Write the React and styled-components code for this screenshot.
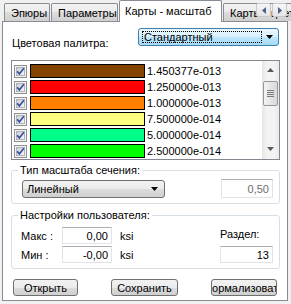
import React from 'react'
import styled, { createGlobalStyle } from 'styled-components'

const GlobalStyle = createGlobalStyle`
    body {
        margin: 0;
        background: #f0f0f0;
    }
    * {
        box-sizing: border-box;
    }
`

const tabs = [
    { label: 'Эпюры', w: 46 },
    { label: 'Параметры', w: 67 },
    { label: 'Карты - масштаб', w: 103, active: true },
    { label: 'Карты - цвета', w: 80 },
]

const rows = [
    { color: '#844400', value: '1.450377e-013' },
    { color: '#ff0000', value: '1.250000e-013' },
    { color: '#ff8000', value: '1.000000e-013' },
    { color: '#ffff80', value: '7.500000e-014' },
    { color: '#00ff88', value: '5.000000e-014' },
    { color: '#00ff00', value: '2.500000e-014' },
]

function Arrow({ color = '#000', up }) {
    return (
        <svg width="7" height="4" viewBox="0 0 7 4">
            <path d={up ? 'M0 4 L3.5 0 L7 4 Z' : 'M0 0 L7 0 L3.5 4 Z'} fill={color} />
        </svg>
    )
}

function CheckBox() {
    return (
        <CheckWrap>
            <svg width="13" height="13" viewBox="0 0 13 13">
                <defs>
                    <linearGradient id="cbg" x1="0" y1="0" x2="1" y2="1">
                        <stop offset="0" stopColor="#cbcfd5" />
                        <stop offset="1" stopColor="#f6f6f6" />
                    </linearGradient>
                </defs>
                <rect x="0.5" y="0.5" width="12" height="12" fill="#f4f4f4" stroke="#8e8f8f" />
                <rect x="2.5" y="2.5" width="8" height="8" fill="url(#cbg)" stroke="#aeb3b9" strokeWidth="1" />
                <path d="M3.3 6.4 L5.4 8.9 L9.8 3.2" fill="none" stroke="#3b4fa0" strokeWidth="1.7" />
            </svg>
        </CheckWrap>
    )
}

function App() {
    return (
        <Window>
            <GlobalStyle />
            <TabStrip>
                {tabs.map(t => (
                    <Tab key={t.label} $w={t.w} $active={t.active}>{t.label}</Tab>
                ))}
                <TabScroll>
                    <TabScrollBtn>
                        <svg width="4" height="7" viewBox="0 0 4 7"><path d="M4 0 L0 3.5 L4 7 Z" fill="#4d6185" /></svg>
                    </TabScrollBtn>
                    <TabScrollBtn>
                        <svg width="4" height="7" viewBox="0 0 4 7"><path d="M0 0 L4 3.5 L0 7 Z" fill="#4d6185" /></svg>
                    </TabScrollBtn>
                </TabScroll>
            </TabStrip>

            <Page>
                <PaletteRow>
                    <PaletteLabel>Цветовая палитра:</PaletteLabel>
                    <PaletteCombo>
                        <FocusRect>Стандартный</FocusRect>
                        <ComboArrow><Arrow /></ComboArrow>
                    </PaletteCombo>
                </PaletteRow>

                <ListBox>
                    <ListItems>
                        {rows.map(r => (
                            <ListRow key={r.value}>
                                <CheckBox />
                                <Swatch $color={r.color} />
                                <Value>{r.value}</Value>
                            </ListRow>
                        ))}
                    </ListItems>
                    <ScrollBar>
                        <ScrollBtn><Arrow up color="#5a5a5a" /></ScrollBtn>
                        <Thumb>
                            <Grip /><Grip /><Grip /><Grip />
                        </Thumb>
                        <ScrollBtn><Arrow color="#5a5a5a" /></ScrollBtn>
                    </ScrollBar>
                </ListBox>

                <GroupBox>
                    <Legend>Тип масштаба сечения:</Legend>
                    <ScaleBody>
                        <GrayCombo>
                            <span>Линейный</span>
                            <Arrow />
                        </GrayCombo>
                        <TextBox $w={52} $h={19} $disabled>0,50</TextBox>
                    </ScaleBody>
                </GroupBox>

                <GroupBox $gap={4}>
                    <Legend>Настройки пользователя:</Legend>
                    <SettingsGrid>
                        <FieldLabel>Макс :</FieldLabel>
                        <TextBox $w={50} $h={17}>0,00</TextBox>
                        <Unit>ksi</Unit>
                        <SectionLabel>Раздел:</SectionLabel>

                        <FieldLabel>Мин :</FieldLabel>
                        <TextBox $w={50} $h={17}>-0,00</TextBox>
                        <Unit>ksi</Unit>
                        <TextBox $w={53} $h={17}>13</TextBox>
                    </SettingsGrid>
                </GroupBox>

                <ButtonRow>
                    <Button $w={65}><span>Открыть</span></Button>
                    <Button $w={67}><span>Сохранить</span></Button>
                    <Button $w={66}><span>Нормализовать</span></Button>
                </ButtonRow>
            </Page>
        </Window>
    )
}

export default App

const Window = styled.div`
    width: 291px;
    height: 304px;
    overflow: hidden;
    background: #f0f0f0;
    font-family: "Liberation Sans", Arial, sans-serif;
    font-size: 11px;
    color: #000;
`;

const TabStrip = styled.div`
    position: relative;
    z-index: 1;
    display: flex;
    align-items: flex-start;
    gap: 1px;
    height: 22px;
    padding-left: 4px;
    overflow: hidden;
`;

const Tab = styled.div`
    flex-shrink: 0;
    width: ${p => p.$w}px;
    height: ${p => p.$active ? 22 : 18}px;
    margin-top: ${p => p.$active ? 0 : 3}px;
    display: flex;
    align-items: center;
    padding: ${p => p.$active ? '0 0 2px 5px' : '0 0 0 6px'};
    border: 1px solid #898c95;
    border-bottom: none;
    border-radius: 2px 2px 0 0;
    background: ${p => p.$active
        ? '#ffffff'
        : 'linear-gradient(#f2f2f2, #ebebeb 50%, #dddddd 50%, #cfcfcf)'};
    white-space: nowrap;
    overflow: hidden;
`;

const TabScroll = styled.div`
    position: absolute;
    top: 3px;
    right: 4px;
    display: flex;
    gap: 1px;
`;

const TabScrollBtn = styled.div`
    width: 15px;
    height: 14px;
    display: flex;
    align-items: center;
    justify-content: center;
    border: 1px solid #c5c8cc;
    border-radius: 2px;
    background: linear-gradient(#f6f6f6, #e4e4e4);
`;

const Page = styled.div`
    margin: -1px 3px 0 2px;
    height: 280px;
    border: 1px solid #898c95;
    background: #ffffff;
    padding: 6px 7px 0 8px;
    display: flex;
    flex-direction: column;
`;

const PaletteRow = styled.div`
    display: flex;
    align-items: flex-start;
`;

const PaletteLabel = styled.div`
    margin-top: 8px;
    padding-left: 1px;
    line-height: 14px;
`;

const PaletteCombo = styled.div`
    margin-left: auto;
    margin-right: 1px;
    width: 141px;
    height: 18px;
    display: flex;
    padding: 2px 2px 2px 3px;
    border: 1px solid #3c7fb1;
    border-radius: 3px;
    background: linear-gradient(#eaf6fd, #d9f0fc 50%, #bee6fd 50%, #a7d9f5);
`;

const FocusRect = styled.div`
    flex: 1;
    display: flex;
    align-items: center;
    padding-left: 1px;
    border: 1px dotted #000;
    line-height: 12px;
`;

const ComboArrow = styled.div`
    width: 14px;
    display: flex;
    align-items: center;
    justify-content: center;
`;

const ListBox = styled.div`
    margin-top: 10px;
    height: 100px;
    display: flex;
    border: 1px solid #828790;
    overflow: hidden;
`;

const ListItems = styled.div`
    flex: 1;
    padding: 2px 0 0 2px;
    overflow: hidden;
`;

const ListRow = styled.div`
    height: 16px;
    display: flex;
    align-items: center;
`;

const CheckWrap = styled.div`
    width: 13px;
    height: 13px;
    display: flex;
`;

const Swatch = styled.div`
    width: 115px;
    height: 14px;
    margin-left: 3px;
    border: 1px solid #000;
    background: ${p => p.$color};
`;

const Value = styled.div`
    margin-left: 2px;
    font-size: 11px;
`;

const ScrollBar = styled.div`
    width: 17px;
    display: flex;
    flex-direction: column;
    background: linear-gradient(90deg, #e6e6e6, #f3f3f3 30%, #f3f3f3 70%, #e9e9e9);
    padding-bottom: 2px;
`;

const ScrollBtn = styled.div`
    height: 17px;
    display: flex;
    align-items: center;
    justify-content: center;
    &:last-child {
        margin-top: auto;
    }
`;

const Thumb = styled.div`
    margin: 3px 1px 0 1px;
    height: 25px;
    border: 1px solid #989898;
    border-radius: 2px;
    background: linear-gradient(90deg, #f4f4f4, #e6e6e6 50%, #d8d8d8);
    display: flex;
    flex-direction: column;
    align-items: center;
    justify-content: center;
    gap: 1px;
`;

const Grip = styled.div`
    width: 7px;
    height: 1px;
    background: #7a7a7a;
`;

const GroupBox = styled.fieldset`
    margin: ${p => p.$gap ?? 3}px 0 0 0;
    padding: 0;
    min-width: 0;
    border: 1px solid #d5dfe5;
    border-radius: 3px;
`;

const Legend = styled.legend`
    margin-left: 6px;
    padding: 0 2px;
    line-height: 14px;
    font-size: 11px;
`;

const ScaleBody = styled.div`
    display: flex;
    align-items: center;
    padding: 2px 6px 5px 10px;
`;

const GrayCombo = styled.div`
    width: 143px;
    height: 18px;
    display: flex;
    align-items: center;
    justify-content: space-between;
    padding: 0 6px 0 4px;
    border: 1px solid #707070;
    border-radius: 3px;
    background: linear-gradient(#f2f2f2, #ebebeb 50%, #dddddd 50%, #cfcfcf);
`;

const TextBox = styled.div`
    width: ${p => p.$w}px;
    height: ${p => p.$h}px;
    margin-left: auto;
    display: flex;
    align-items: center;
    justify-content: flex-end;
    padding-right: 3px;
    border: 1px solid #e2e3ea;
    border-top-color: #abadb3;
    background: #ffffff;
    color: ${p => p.$disabled ? '#6d6d6d' : '#000'};
    font-size: 11px;
`;

const SettingsGrid = styled.div`
    display: grid;
    grid-template-columns: 41px 50px 1fr 53px;
    row-gap: 2px;
    align-items: center;
    padding: 5px 6px 5px 9px;
`;

const FieldLabel = styled.div`
    line-height: 14px;
`;

const Unit = styled.div`
    padding-left: 8px;
`;

const SectionLabel = styled.div`
    align-self: start;
    line-height: 14px;
`;

const ButtonRow = styled.div`
    display: flex;
    justify-content: space-between;
    margin-top: 10px;
    padding: 0 3px 0 2px;
`;

const Button = styled.button`
    width: ${p => p.$w}px;
    height: 17px;
    padding: 0;
    display: flex;
    align-items: center;
    justify-content: center;
    overflow: hidden;
    white-space: nowrap;
    border: 1px solid #707070;
    border-radius: 3px;
    background: linear-gradient(#f2f2f2, #ebebeb 50%, #dddddd 50%, #cfcfcf);
    font-family: "Liberation Sans", Arial, sans-serif;
    font-size: 11px;
    color: #000;
    > span {
        flex-shrink: 0;
    }
`;
